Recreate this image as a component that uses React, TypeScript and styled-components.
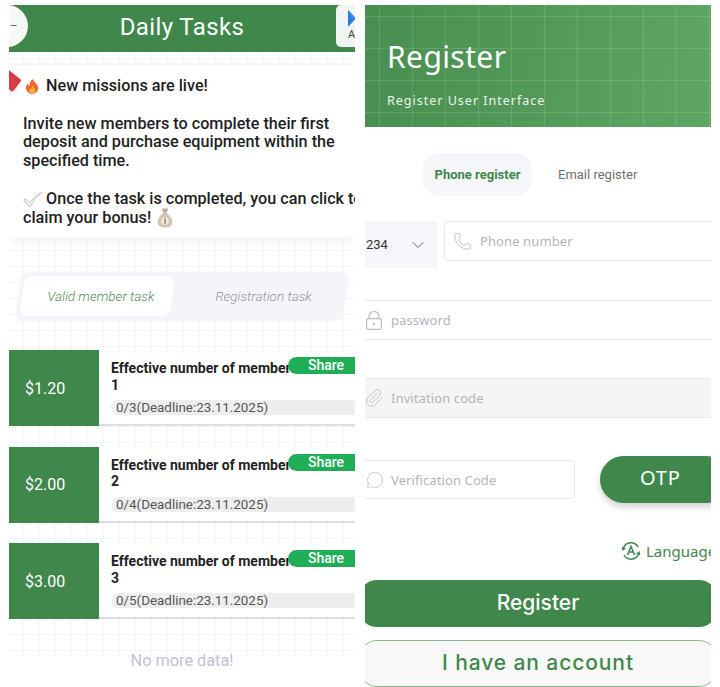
import React from 'react';
import styled, { createGlobalStyle } from 'styled-components';
import { ChevronDown, MessageCircle, Paperclip, Phone } from 'lucide-react';

const GlobalStyle = createGlobalStyle`
  html, body {
    margin: 0;
    padding: 0;
    background: #fff;
    font-family: Roboto, "Liberation Sans", sans-serif;
  }
`;

const green = '#3f874b';

const Page = styled.div`
  display: flex;
  gap: 10px;
  width: 720px;
  height: 687px;
  padding: 5px 9px 0;
  box-sizing: border-box;
  overflow: hidden;
`;

const Panel = styled.div`
  position: relative;
  display: flex;
  flex-direction: column;
  width: 346px;
  flex: none;
  overflow: hidden;
`;

/* ---------- left: daily tasks ---------- */

const TaskBar = styled.div`
  position: relative;
  flex: none;
  height: 47px;
  background: ${green};
  display: flex;
  align-items: center;
  justify-content: center;
  color: #fff;
  font-size: 24px;
  letter-spacing: 0.4px;
  padding-bottom: 4px;
  box-sizing: border-box;
`;

const BackCircle = styled.div`
  position: absolute;
  left: -23px;
  top: 0;
  width: 42px;
  height: 42px;
  border-radius: 50%;
  background: #f6f8f6;
  box-sizing: border-box;
  display: flex;
  align-items: center;
  justify-content: flex-end;
  padding-right: 10px;
  color: #666;
  font-size: 12px;
`;

const AppTile = styled.div`
  position: absolute;
  left: 327px;
  top: 0;
  width: 40px;
  height: 42px;
  border-radius: 5px 0 0 5px;
  background: #eef5f2;
  color: #444;
  font-size: 11px;
  letter-spacing: 0;
  padding: 5px 0 0 12px;
  box-sizing: border-box;
  line-height: 12px;
  display: flex;
  flex-direction: column;
  gap: 2px;
`;

const GridArea = styled.div`
  flex: none;
  height: 602px;
  background-color: #fff;
  background-image:
    linear-gradient(#f4f5f9 1px, transparent 1px),
    linear-gradient(90deg, #f4f5f9 1px, transparent 1px);
  background-size: 16px 16px;
  background-position: 14px 6px;
  display: flex;
  flex-direction: column;
`;

const Spacer = styled.div`
  flex: none;
  height: 13px;
  box-shadow: inset 0 -4px 5px -3px #eef0f4;
`;

const Notice = styled.div`
  position: relative;
  flex: none;
  height: 172px;
  background: #fff;
  box-sizing: border-box;
  padding: 12px 0 0 14px;
  font-size: 16.2px;
  line-height: 18.8px;
  font-weight: 500;
  color: #1f1f1f;
  white-space: nowrap;
  box-shadow: 0 6px 10px -2px #eff0f3;
`;

const NoticeLine = styled.div<{ $indent?: number; $gap: number }>`
  display: flex;
  align-items: center;
  gap: ${(p) => p.$gap}px;
  height: 18.8px;
  padding-left: ${(p) => p.$indent ?? 0}px;
  svg {
    flex: none;
  }
`;

const NoticeGap = styled.div`
  height: 18.8px;
`;

const RedTag = styled.div`
  position: absolute;
  left: -8px;
  top: 8px;
  width: 18px;
  height: 15px;
  background: #d93a45;
  border-radius: 2px;
  transform: rotate(38deg);
  box-shadow: 0 5px 7px #dfe4f5;
`;

const TaskTabs = styled.div`
  display: flex;
  align-items: stretch;
  margin: 35px 0 0 9px;
  width: 328px;
  height: 50px;
  box-sizing: border-box;
  padding: 4px;
  background: #f4f5fa;
  border-radius: 8px;
  transform: skewX(-8deg);
`;

const TaskTab = styled.div<{ $active?: boolean }>`
  width: 150px;
  height: 40px;
  flex: none;
  display: flex;
  align-items: center;
  justify-content: center;
  border-radius: 8px;
  box-sizing: border-box;
  padding-left: 8px;
  background: ${(p) => (p.$active ? '#fff' : 'transparent')};
  margin-left: ${(p) => (p.$active ? '0' : '12px')};
  span {
    display: block;
    transform: skewX(8deg);
    font-size: 13.5px;
    font-style: italic;
    font-weight: 300;
    color: ${(p) => (p.$active ? '#4f8a5a' : '#8f93a6')};
  }
`;

const TaskList = styled.div`
  display: flex;
  flex-direction: column;
  gap: 20.5px;
  margin-top: 28px;
`;

const TaskCard = styled.div`
  position: relative;
  display: flex;
  height: 76px;
  flex: none;
  background: #fff;
  border-bottom: 2px solid #dcdde0;
  box-sizing: border-box;
`;

const Price = styled.div`
  width: 90px;
  flex: none;
  height: 76px;
  background: ${green};
  color: #fff;
  font-size: 16px;
  display: flex;
  align-items: center;
  padding-left: 16px;
  box-sizing: border-box;
`;

const TaskBody = styled.div`
  flex: 1;
  min-width: 0;
  padding: 10px 0 0 12px;
`;

const TaskTitle = styled.div`
  font-size: 14px;
  line-height: 16.5px;
  font-weight: 700;
  color: #222;
  width: 190px;
`;

const Progress = styled.div`
  margin-top: 7px;
  height: 15px;
  line-height: 15px;
  background: #eeeeee;
  border-radius: 8px 0 0 8px;
  padding-left: 5px;
  font-size: 13.4px;
  color: #555;
`;

const ShareTag = styled.div`
  position: absolute;
  left: 279px;
  top: 7px;
  width: 80px;
  height: 17px;
  background: #1fae55;
  color: #fff;
  border-radius: 9px 0 0 9px;
  font-size: 14px;
  font-weight: 500;
  line-height: 16px;
  padding-left: 20px;
  box-sizing: border-box;
`;

const NoMore = styled.div`
  margin-top: -3px;
  text-align: center;
  font-size: 16.3px;
  color: #bfc2cf;
`;

/* ---------- right: register ---------- */

const Hero = styled.div`
  flex: none;
  height: 122px;
  box-sizing: border-box;
  padding: 32px 0 0 22px;
  color: #fff;
  background-image:
    linear-gradient(rgba(255, 255, 255, 0.13) 1px, transparent 1px),
    linear-gradient(90deg, rgba(255, 255, 255, 0.13) 1px, transparent 1px),
    linear-gradient(100deg, #478e50, #5fa563);
  background-size: 33px 32px, 33px 32px, 100% 100%;
  background-position: 14px 11px, 14px 11px, 0 0;
`;

const HeroTitle = styled.div`
  font-family: "Noto Sans", sans-serif;
  font-size: 30px;
  line-height: 40px;
  letter-spacing: 0.4px;
`;

const HeroSub = styled.div`
  font-family: "Noto Sans", sans-serif;
  font-size: 12.5px;
  line-height: 16px;
  margin-top: 16px;
  letter-spacing: 1px;
  color: #eef5ef;
`;

const MethodTabs = styled.div`
  display: flex;
  align-items: center;
  margin: 26px 0 0 58px;
  height: 43px;
`;

const MethodTab = styled.div<{ $active?: boolean }>`
  width: ${(p) => (p.$active ? '109px' : 'auto')};
  height: 43px;
  margin-left: ${(p) => (p.$active ? '0' : '26px')};
  display: flex;
  align-items: center;
  justify-content: center;
  border-radius: 16px;
  font-size: 13px;
  background: ${(p) => (p.$active ? '#f4f6fa' : 'transparent')};
  font-weight: ${(p) => (p.$active ? 700 : 400)};
  color: ${(p) => (p.$active ? green : '#6f6f6f')};
`;

const PhoneRow = styled.div`
  display: flex;
  align-items: flex-start;
  gap: 6px;
  margin-top: 25px;
`;

const CountrySelect = styled.div`
  width: 73px;
  height: 47px;
  flex: none;
  background: #f5f6fa;
  display: flex;
  align-items: center;
  justify-content: space-between;
  box-sizing: border-box;
  padding: 0 10px 0 1px;
  font-size: 13px;
  color: #333;
  svg {
    color: #666;
  }
`;

const BoxedInput = styled.div<{ $width: number; $height: number; $padLeft: number; $gap: number }>`
  width: ${(p) => p.$width}px;
  flex: none;
  height: ${(p) => p.$height}px;
  border: 1px solid #e9e9ec;
  border-radius: 4px;
  box-sizing: border-box;
  display: flex;
  align-items: center;
  gap: ${(p) => p.$gap}px;
  padding-left: ${(p) => p.$padLeft}px;
`;

const Placeholder = styled.span`
  font-family: "Noto Sans", sans-serif;
  font-size: 13px;
  letter-spacing: 0.1px;
  color: #b3b4bd;
`;

const LineInput = styled.div<{ $filled?: boolean; $top: number }>`
  flex: none;
  height: 40px;
  margin-top: ${(p) => p.$top}px;
  box-sizing: border-box;
  display: flex;
  align-items: center;
  gap: 9px;
  border-top: 1px solid #e9e9ec;
  border-bottom: 1px solid #e9e9ec;
  background: ${(p) => (p.$filled ? '#f5f5f5' : '#fff')};
`;

const IconSlot = styled.span`
  width: 17px;
  flex: none;
  display: flex;
  justify-content: center;
  color: #bcbdc4;
  svg {
    flex: none;
  }
`;

const OtpRow = styled.div`
  display: flex;
  align-items: flex-start;
  gap: 25px;
  margin: 42px 0 0 -6px;
`;

const OtpButton = styled.div`
  width: 130px;
  height: 47px;
  flex: none;
  margin-top: -4px;
  background: ${green};
  color: #fff;
  border-radius: 24px;
  font-family: "Noto Sans", sans-serif;
  font-size: 20px;
  letter-spacing: 0.8px;
  line-height: 44px;
  padding-left: 40px;
  box-sizing: border-box;
  box-shadow: 0 4px 7px rgba(0, 0, 0, 0.18);
`;

const LanguageRow = styled.div`
  display: flex;
  align-items: center;
  gap: 5px;
  margin: 38px 0 0 256px;
  height: 20px;
  white-space: nowrap;
  font-family: "Noto Sans", sans-serif;
  font-size: 15px;
  color: ${green};
  svg {
    flex: none;
  }
`;

const WideButton = styled.div<{ $outline?: boolean; $top: number }>`
  flex: none;
  height: 47px;
  margin: ${(p) => p.$top}px -6px 0;
  border-radius: 18px;
  box-sizing: border-box;
  display: flex;
  align-items: center;
  justify-content: center;
  font-family: Inter, sans-serif;
  font-weight: 500;
  font-size: 21px;
  letter-spacing: ${(p) => (p.$outline ? '0.9px' : '0')};
  padding-bottom: 3px;
  background: ${(p) => (p.$outline ? '#f7f8f7' : green)};
  color: ${(p) => (p.$outline ? green : '#fff')};
  border: ${(p) => (p.$outline ? `1px solid #8fb796` : 'none')};
`;

const Fire = () => (
  <svg width="13" height="15" viewBox="0 0 13 15">
    <path d="M6.8 0c.6 2.6 4.2 4.3 5.2 7.6C13 11.600 10 15 6.500 15S0 12.300 0 9c0-2 1-3.400 2-4.400.1 1.200.6 2 1.500 2.400C3.300 4 4.600 1.500 6.800 0z" fill="#ee6a2c" />
    <path d="M6.600 7c.3 1.300 2.900 2.400 2.900 4.600 0 1.800-1.400 3.100-3.100 3.100s-3-1.300-3-2.900c0-1.900 2.700-2.700 3.200-4.800z" fill="#fbb43a" />
  </svg>
);

const CheckMark = () => (
  <svg width="19" height="15" viewBox="0 0 19 15">
    <path d="M0.500 8 L3 7 L6.500 10.500 C9.500 6.500 14 2.500 18.500 0.500 C14 4.500 10 9.500 7.500 14.500 L6 14.500 Z" fill="#eceded" stroke="#b4b6ba" strokeWidth="0.7" />
  </svg>
);

const MoneyBag = () => (
  <svg width="16" height="20" viewBox="0 0 15 19">
    <path d="M4.500 0.500 L10.500 0.500 L9 4.500 L6 4.500 Z" fill="#b6ab97" />
    <path d="M5.800 4.800 L9.200 4.800 C12.500 7.500 14.500 10.500 14.500 13.500 C14.500 17 11.500 18.500 7.500 18.500 C3.500 18.500 0.500 17 0.500 13.500 C0.500 10.500 2.500 7.500 5.800 4.800 Z" fill="#cfc5b3" />
    <circle cx="7.500" cy="12.500" r="3.600" fill="#efe9dc" />
    <rect x="6.900" y="9.800" width="1.200" height="5.400" fill="#8a7a5a" />
  </svg>
);

const PlayMark = () => (
  <svg width="8" height="17" viewBox="0 0 8 17">
    <path d="M0 0 L8 8.500 L0 17 Z" fill="#2a7fd8" />
    <path d="M0 0 L8 8.500 L4 8.500 Z" fill="#4285f4" />
  </svg>
);

const LockIcon = () => (
  <svg width="16" height="19" viewBox="0 0 16 19" fill="none" stroke="currentColor" strokeWidth="1.200">
    <rect x="0.600" y="7.600" width="14.800" height="10.800" rx="1.500" />
    <path d="M3 7.500 V5.500 A5 5 0 0 1 13 5.500 V7.500" />
    <path d="M8 11.500 V14" strokeWidth="1.800" />
  </svg>
);

const LanguageIcon = () => (
  <svg width="20" height="20" viewBox="0 0 20 20" fill="none" stroke={green} strokeWidth="1.500">
    <path d="M2.500 7 A8 8 0 0 1 17 6" />
    <path d="M17.500 13 A8 8 0 0 1 3 14" />
    <path d="M1 6 L4.500 7.500 L1.500 9.500 Z" fill={green} strokeWidth="0.500" />
    <path d="M19 14 L15.500 12.500 L18.500 10.500 Z" fill={green} strokeWidth="0.500" />
    <path d="M6.500 14 L10 5.500 L13.500 14 M7.800 11 H12.200" strokeWidth="1.600" />
  </svg>
);

const tasks = [
  { price: '$1.20', index: 1, progress: '0/3(Deadline:23.11.2025)' },
  { price: '$2.00', index: 2, progress: '0/4(Deadline:23.11.2025)' },
  { price: '$3.00', index: 3, progress: '0/5(Deadline:23.11.2025)' },
];

export default function App() {
  return (
    <>
      <GlobalStyle />
      <Page>
        <Panel>
          <TaskBar>
            <BackCircle>–</BackCircle>
            Daily Tasks
            <AppTile>
              <PlayMark />
              <span>A</span>
            </AppTile>
          </TaskBar>
          <GridArea>
            <Spacer />
            <Notice>
              <RedTag />
              <NoticeLine $indent={3} $gap={7}>
                <Fire />
                New missions are live!
              </NoticeLine>
              <NoticeGap />
              <div>Invite new members to complete their first</div>
              <div>deposit and purchase equipment within the</div>
              <div>specified time.</div>
              <NoticeGap />
              <NoticeLine $gap={4}>
                <CheckMark />
                Once the task is completed, you can click to
              </NoticeLine>
              <NoticeLine $gap={6}>
                claim your bonus!
                <MoneyBag />
              </NoticeLine>
            </Notice>
            <TaskTabs>
              <TaskTab $active>
                <span>Valid member task</span>
              </TaskTab>
              <TaskTab>
                <span>Registration task</span>
              </TaskTab>
            </TaskTabs>
            <TaskList>
              {tasks.map((task) => (
                <TaskCard key={task.index}>
                  <Price>{task.price}</Price>
                  <TaskBody>
                    <TaskTitle>
                      Effective number of members
                      <br />
                      {task.index}
                    </TaskTitle>
                    <Progress>{task.progress}</Progress>
                  </TaskBody>
                  <ShareTag>Share</ShareTag>
                </TaskCard>
              ))}
            </TaskList>
          </GridArea>
          <NoMore>No more data!</NoMore>
        </Panel>

        <Panel>
          <Hero>
            <HeroTitle>Register</HeroTitle>
            <HeroSub>Register User Interface</HeroSub>
          </Hero>
          <MethodTabs>
            <MethodTab $active>Phone register</MethodTab>
            <MethodTab>Email register</MethodTab>
          </MethodTabs>
          <PhoneRow>
            <CountrySelect>
              234
              <ChevronDown size={20} strokeWidth={1.2} />
            </CountrySelect>
            <BoxedInput $width={290} $height={40} $padLeft={8} $gap={8}>
              <Phone size={19} strokeWidth={1} color="#b5b6bd" />
              <Placeholder>Phone number</Placeholder>
            </BoxedInput>
          </PhoneRow>
          <LineInput $top={32}>
            <IconSlot>
              <LockIcon />
            </IconSlot>
            <Placeholder>password</Placeholder>
          </LineInput>
          <LineInput $top={38} $filled>
            <IconSlot>
              <Paperclip size={20} strokeWidth={1.100} />
            </IconSlot>
            <Placeholder>Invitation code</Placeholder>
          </LineInput>
          <OtpRow>
            <BoxedInput $width={216} $height={39} $padLeft={6} $gap={7}>
              <MessageCircle size={18} strokeWidth={1} color="#b5b6bd" />
              <Placeholder>Verification Code</Placeholder>
            </BoxedInput>
            <OtpButton>OTP</OtpButton>
          </OtpRow>
          <LanguageRow>
            <LanguageIcon />
            Language
          </LanguageRow>
          <WideButton $top={19}>Register</WideButton>
          <WideButton $top={13} $outline>
            I have an account
          </WideButton>
        </Panel>
      </Page>
    </>
  );
}
